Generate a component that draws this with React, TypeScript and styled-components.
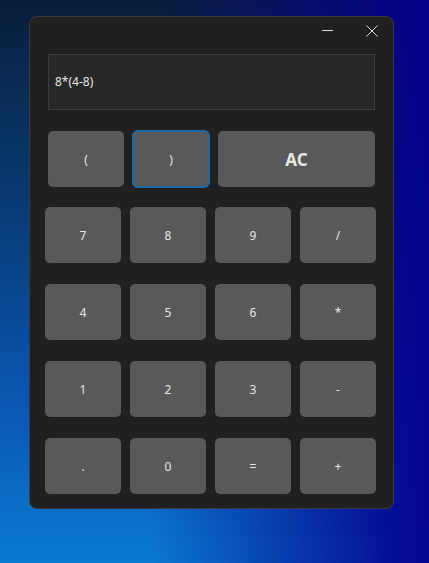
import styled, { createGlobalStyle } from 'styled-components';

const GlobalStyle = createGlobalStyle`
  html, body {
    margin: 0;
    padding: 0;
    height: 100%;
  }
  body {
    font-family: 'Noto Sans', 'Open Sans', sans-serif;
  }
  #root {
    height: 100%;
  }
`;

const Desktop = styled.div`
  box-sizing: border-box;
  width: 429px;
  height: 563px;
  padding: 16px 0 0 29px;
  overflow: hidden;
  background: linear-gradient(
    to bottom,
    #081f3a 0%,
    #083a72 35%,
    #0a55b0 70%,
    #0a7ad0 100%
  );
  position: relative;
`;

const RightTint = styled.div`
  position: absolute;
  inset: 0;
  background: linear-gradient(
    to right,
    rgba(4, 0, 90, 0) 0%,
    rgba(4, 0, 90, 0) 35%,
    rgba(4, 0, 140, 0.85) 90%,
    rgba(4, 0, 140, 0.95) 100%
  );
  pointer-events: none;
`;

const Window = styled.div`
  position: relative;
  z-index: 1;
  box-sizing: border-box;
  width: 365px;
  height: 493px;
  background: #202020;
  border: 1px solid #3a3a3a;
  border-radius: 8px;
  padding: 0 16px 14px 15px;
  display: flex;
  flex-direction: column;
`;

const TitleBar = styled.div`
  height: 29px;
  display: flex;
  justify-content: flex-end;
  align-items: center;
  gap: 20px;
  margin-right: -7px;
`;

const TitleButton = styled.div`
  width: 24px;
  height: 24px;
  display: flex;
  align-items: center;
  justify-content: center;
`;

const Display = styled.div`
  box-sizing: border-box;
  margin: 8px 2px 0 3px;
  height: 57px;
  background: #272727;
  border: 1px solid #3c3c3c;
  display: flex;
  align-items: center;
  padding-left: 6px;
  color: #e6e6e6;
  font-size: 12px;
`;

const TopRow = styled.div`
  margin: 21px 2px 0 3px;
  display: grid;
  grid-template-columns: 76px 78px 1fr;
  grid-template-rows: 56px;
  gap: 8px;
  align-items: center;
`;

const Grid = styled.div`
  margin-top: 20px;
  display: grid;
  grid-template-columns: repeat(4, 76px);
  grid-auto-rows: 56px;
  column-gap: 9px;
  row-gap: 21px;
`;

const Key = styled.button<{ $focused?: boolean; $bold?: boolean }>`
  box-sizing: border-box;
  height: ${(p) => (p.$focused ? '58px' : '56px')};
  border: ${(p) => (p.$focused ? '2px solid #1d6ba6' : 'none')};
  border-radius: ${(p) => (p.$focused ? '6px' : '5px')};
  background: #595959;
  color: #e8e8e8;
  font-family: 'Noto Sans', 'Open Sans', sans-serif;
  font-size: ${(p) => (p.$bold ? '17px' : '12px')};
  font-weight: ${(p) => (p.$bold ? 700 : 400)};
  padding: 0;
  display: flex;
  align-items: center;
  justify-content: center;
  cursor: pointer;
`;

const keys = ['7', '8', '9', '/', '4', '5', '6', '*', '1', '2', '3', '-', '.', '0', '=', '+'];

const App = () => {
  return (
    <>
      <GlobalStyle />
      <Desktop>
        <RightTint />
        <Window>
          <TitleBar>
            <TitleButton>
              <svg width="12" height="12" viewBox="0 0 12 12">
                <line x1="0" y1="5.5" x2="11" y2="5.5" stroke="#e0e0e0" strokeWidth="1" />
              </svg>
            </TitleButton>
            <TitleButton>
              <svg width="12" height="12" viewBox="0 0 12 12">
                <path d="M0.5 0.5 L11.5 11.5 M11.5 0.5 L0.5 11.5" stroke="#e0e0e0" strokeWidth="1" />
              </svg>
            </TitleButton>
          </TitleBar>
          <Display>8*(4-8)</Display>
          <TopRow>
            <Key>(</Key>
            <Key $focused>)</Key>
            <Key $bold>AC</Key>
          </TopRow>
          <Grid>
            {keys.map((k) => (
              <Key key={k}>{k}</Key>
            ))}
          </Grid>
        </Window>
      </Desktop>
    </>
  );
};

export default App;
